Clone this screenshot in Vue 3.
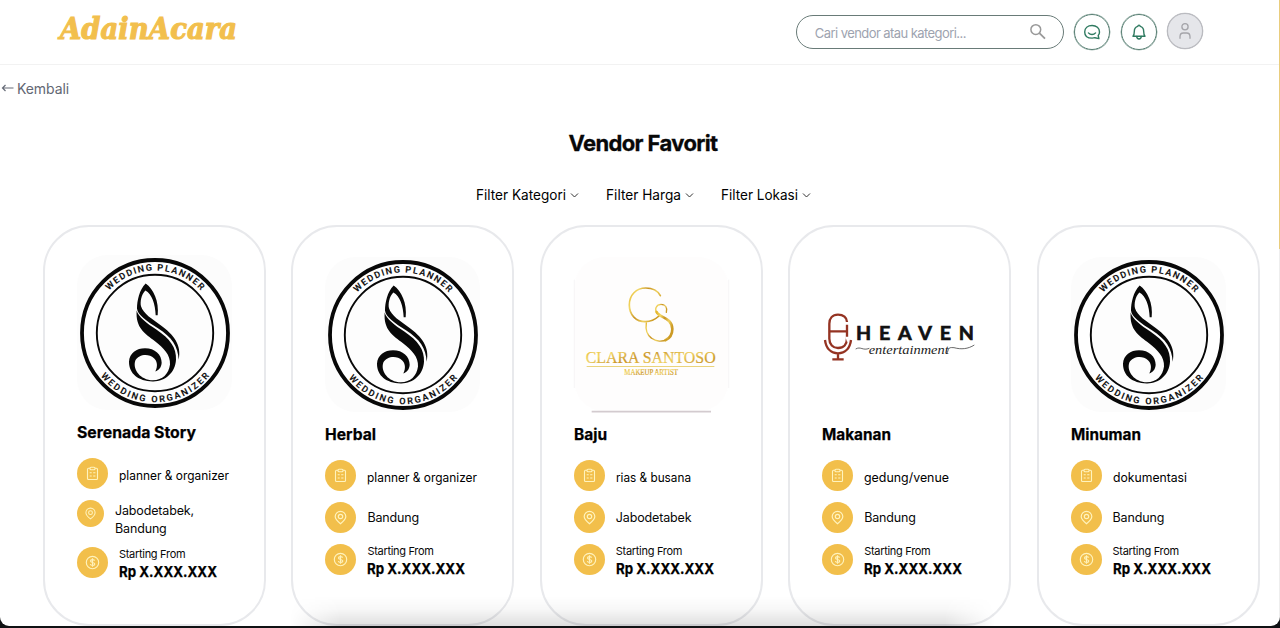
<script setup>
const filters = [
  { label: 'Filter Kategori', w: 90 },
  { label: 'Filter Harga', w: 75 },
  { label: 'Filter Lokasi', w: 77 }
]
const vendors = [
  { name: 'Serenada Story', w: 119, logo: 'wedding', category: 'planner & organizer', cw: 110, location: 'Jabodetabek, Bandung', wrap: true },
  { name: 'Herbal', w: 51, logo: 'wedding', category: 'planner & organizer', cw: 110, location: 'Bandung' },
  { name: 'Baju', w: 33, logo: 'clara', category: 'rias & busana', cw: 75, location: 'Jabodetabek' },
  { name: 'Makanan', w: 69, logo: 'heaven', category: 'gedung/venue', cw: 85, location: 'Bandung' },
  { name: 'Minuman', w: 70, logo: 'wedding', category: 'dokumentasi', cw: 74, location: 'Bandung' }
]
</script>

<template>
  <div class="page">
    <header class="header">
      <svg class="brand" width="182" height="34" viewBox="0 0 182 34" role="img">
        <text x="3" y="26" textLength="177" lengthAdjust="spacingAndGlyphs">AdainAcara</text>
      </svg>
      <div class="tools">
        <div class="search">
          <span>Cari vendor atau kategori...</span>
          <svg width="18" height="18" viewBox="0 0 18 18" fill="none" stroke="#999" stroke-width="1.5">
            <circle cx="6.8" cy="6.6" r="4.9" /><path d="M10.4 10.2 16 15.7" stroke-width="1.8" />
          </svg>
        </div>
        <div class="round chat">
          <svg width="18" height="18" viewBox="0 0 18 18" fill="none" stroke="#2f7a60" stroke-width="1.4" stroke-linecap="round" stroke-linejoin="round">
            <path d="M15.2 12.5c.9-1 1.300-2.200 1.300-3.600 0-3.900-3.100-6.400-7.400-6.400S1.700 5 1.700 8.900s3 6.200 7.400 6.200c1 0 2-.1 2.800-.4l4 .9z" />
            <path d="M5.400 9.900c2 2.200 5.200 2.200 7.200 0" />
          </svg>
        </div>
        <div class="round bell">
          <svg width="18" height="18" viewBox="0 0 18 18" fill="none" stroke="#2f7a60" stroke-width="1.4" stroke-linecap="round" stroke-linejoin="round">
            <path d="M3 13.300h12c-.8-.9-1.300-2-1.300-4.800 0-2.800-1.400-4.600-3.500-5.100C10 1.700 8 1.700 7.800 3.400 5.700 3.900 4.300 5.700 4.300 8.500c0 2.800-.5 3.900-1.300 4.800z" />
            <path d="M6.700 13.500c.2 3.300 4.400 3.300 4.600 0" />
          </svg>
        </div>
        <div class="round user">
          <svg width="18" height="18" viewBox="0 0 18 18" fill="none" stroke="#a4a4a9" stroke-width="1.3" stroke-linecap="round">
            <circle cx="9" cy="4.700" r="3.100" /><path d="M4 16.300v-1.500c0-2.300 1.200-3.800 3.300-3.800h3.400c2.100 0 3.300 1.500 3.300 3.800v1.500" />
          </svg>
        </div>
      </div>
    </header>

    <a class="back">
      <svg width="13" height="10" viewBox="0 0 13 10" fill="none" stroke="#666b77" stroke-width="1.2"><path d="M12.500 5H1.500M4.500 2 1.500 5l3 3" /></svg>
      <span>Kembali</span>
    </a>

    <h1>Vendor Favorit</h1>

    <nav class="filters">
      <button v-for="f in filters" :key="f.label">
        <svg :width="f.w" height="20"><text x="0" y="15" :textLength="f.w" lengthAdjust="spacingAndGlyphs">{{ f.label }}</text></svg>
        <svg width="9" height="7" viewBox="0 0 9 7" fill="none" stroke="#333" stroke-width="1"><path d="M1 1.500 4.500 5 8 1.500" /></svg>
      </button>
    </nav>

    <main class="cards">
      <article v-for="v in vendors" :key="v.name" class="card" :class="{ tall: v.wrap }">
        <svg v-if="v.logo === 'wedding'" class="logo" viewBox="0 0 155 155">
          <rect width="155" height="155" rx="31" fill="#fcfcfc" />
          <circle cx="78" cy="78" r="73" fill="#fff" stroke="#080808" stroke-width="3.800" />
          <circle cx="78" cy="78" r="58.200" fill="#fdfdfd" stroke="#080808" stroke-width="1.900" />
          <path id="arc-top" d="M15.500 78a62.500 62.500 0 0 1 125 0" fill="none" />
          <path id="arc-bottom" d="M8.700 78a69.300 69.300 0 0 0 138.600 0" fill="none" />
          <text class="ring"><textPath href="#arc-top" startOffset="50%" text-anchor="middle" textLength="103">WEDDING PLANNER</textPath></text>
          <text class="ring"><textPath href="#arc-bottom" startOffset="50%" text-anchor="middle" textLength="125">WEDDING ORGANIZER</textPath></text>
          <g transform="scale(.33333) translate(-141 -121.500)" fill="#080808">
            <path d="M347 207C370 222 388 262 383 302L377 302C376 270 366 238 346 228C334 240 330 262 333 275C340 298 368 314 392 332C430 360 456 390 446 436C444 395 425 368 385 342C350 320 322 300 321 282C321 260 328 225 347 207Z" />
            <path d="M320 288C325 307 350 326 380 346C420 373 440 400 438 436C436 475 405 502 368 501C325 500 297 478 297 442C298 415 320 401 345 401C375 401 395 420 395 445C394 460 386 468 376 471C384 455 382 440 372 431C355 415 325 420 316 438C308 460 325 492 362 497C395 500 416 480 420 450C422 420 400 400 375 380C345 358 316 340 320 288Z" />
          </g>
        </svg>

        <svg v-else-if="v.logo === 'clara'" class="logo" viewBox="117 112 465 465">
          <defs>
            <linearGradient id="gold" x1="0" x2="1" y1="0" y2=".5">
              <stop offset="0" stop-color="#e5b72e" /><stop offset=".25" stop-color="#f2d766" /><stop offset=".5" stop-color="#c99424" /><stop offset=".75" stop-color="#efd160" /><stop offset="1" stop-color="#cc9a25" />
            </linearGradient>
          </defs>
          <rect x="118" y="112" width="463" height="464" rx="93" fill="#fefdfd" />
          <path d="M118 180v325M581 180v325" stroke="#f1f0f2" stroke-width="2" />
          <path d="M170 576H528" stroke="#d3cbcf" stroke-width="5" />
          <g fill="none" stroke="url(#gold)" stroke-linecap="round">
            <path d="M376 228C367 211 350 205 332 205C304 205 283 226 283 256C283 286 303 306 331 306C348 306 360 300 372 289" stroke-width="5" />
            <path d="M394 278C398 263 390 254 378 254C364 254 357 270 366 280" stroke-width="4" />
            <path d="M365 277C371 294 411 292 412 328C412 344 404 356 391 362" stroke-width="8" />
            <path d="M396 359C382 367 363 366 350 356C336 346 331 330 334 310" stroke-width="4" />
          </g>
          <text x="152" y="431" class="clara" font-size="51" textLength="390" lengthAdjust="spacingAndGlyphs">CLARA SANTOSO</text>
          <path d="M155 440.500H538" stroke="#ead47c" stroke-width="3" />
          <text x="268" y="466" class="clara" font-size="23" textLength="161" lengthAdjust="spacingAndGlyphs">MAKEUP ARTIST</text>
        </svg>

        <svg v-else class="logo" viewBox="112 112 465 465">
          <g fill="none" stroke="#943322" stroke-width="7">
            <path d="M187 307C187 294 176 285 160 285C143 285 134 297 134 312V357C134 374 145 385 160 385C177 385 187 374 187 356V315M134 335H187" />
            <path d="M121 361C124 386 139 401 160 401C181 401 196 386 199 361M160 401V418M143 419H177" />
          </g>
          <path d="M182 351h12l-6 18z" fill="#fff" />
          <text x="214" y="360" class="heaven" textLength="354">HEAVEN</text>
          <text x="252" y="404" class="script" textLength="240" lengthAdjust="spacingAndGlyphs">entertainment</text>
          <path d="M213 388C228 379 234 394 254 386M486 402C494 390 486 382 508 384C530 390 550 388 569 376" fill="none" stroke="#333" stroke-width="2.200" />
        </svg>

        <h2><svg :width="v.w" height="24"><text x="0" y="17.500" :textLength="v.w" lengthAdjust="spacingAndGlyphs">{{ v.name }}</text></svg></h2>

        <div class="row">
          <span class="dot">
            <svg width="15" height="15" viewBox="0 0 15 15" fill="none" stroke="#fff3bd" stroke-width="1.100">
              <path d="M5 2.300H3.500q-1 0-1 1v9.200q0 1 1 1h8q1 0 1-1V3.300q0-1-1-1H10" /><rect x="5" y="1.200" width="5" height="2.500" rx="1" /><path d="M4.700 6.800h2M8.200 6.800h2.200M4.700 10h2M8.200 10h2.200" />
            </svg>
          </span>
          <svg class="label" :width="v.cw" height="18"><text x="0" y="14" :textLength="v.cw" lengthAdjust="spacingAndGlyphs">{{ v.category }}</text></svg>
        </div>
        <div class="row" :class="{ wrapped: v.wrap }">
          <span class="dot">
            <svg width="15" height="15" viewBox="0 0 15 15" fill="none" stroke="#fff3bd" stroke-width="1.200">
              <path d="M7.500 13.700C4.600 11.500 2.200 9.300 2.200 6.600a5.300 5.300 0 0 1 10.600 0c0 2.700-2.400 4.900-5.300 7.100z" /><circle cx="7.500" cy="6.500" r="2.200" />
            </svg>
          </span>
          <span class="place">{{ v.location }}</span>
        </div>
        <div class="row price">
          <span class="dot">
            <svg width="15" height="15" viewBox="0 0 15 15" fill="none" stroke="#fff3bd" stroke-width="1.150">
              <circle cx="7.500" cy="7.500" r="6.200" /><path d="M9.700 5.700C9.300 4.200 5.500 4.200 5.500 6s4.300 1.200 4.300 3.100c0 1.800-4 1.800-4.500.1M7.500 3.300v8.400" />
            </svg>
          </span>
          <div class="amount">
            <small>Starting From</small>
            <svg width="98" height="19"><text x="0" y="15" textLength="98" lengthAdjust="spacingAndGlyphs">Rp X.XXX.XXX</text></svg>
          </div>
        </div>
      </article>
    </main>
    <div class="shade"></div>
    <div class="edge"></div>
    <div class="frame"></div>
  </div>
</template>

<style>
html, body { margin: 0; overflow: hidden; background: #fff; }
</style>

<style scoped>
.page { position: relative; width: 1280px; height: 628px; overflow: hidden; box-sizing: border-box; background: #fff; color: #080808; font-family: Inter, "Open Sans", sans-serif; }
svg { display: block; flex: none; overflow: visible; }
.header { height: 65px; box-sizing: border-box; border-bottom: 1px solid #f2f2f2; display: flex; justify-content: space-between; align-items: flex-start; padding: 13px 77px 0 57px; }
.brand { font: italic 700 29px "DejaVu Serif", serif; fill: #f2bf4d; stroke: #f2bf4d; stroke-width: 1.1; }
.tools { display: flex; gap: 10.400px; }
.search { width: 268px; height: 34px; margin-top: 2px; box-sizing: border-box; border: 1px solid #697b78; border-radius: 17px; display: flex; align-items: center; justify-content: space-between; padding: 0 16px 0 18px; color: #9da3af; font-size: 13px; letter-spacing: -.57px; }
.search span { padding-top: 1px; white-space: nowrap; }
.search svg { margin-top: -1px; }
.round { width: 36px; height: 36px; box-sizing: border-box; border: 1.500px solid #587f73; border-radius: 50%; display: flex; align-items: center; justify-content: center; margin-top: 1px; box-shadow: 0 0 0 .3px #587f73; }
.round.user { margin-top: 0; background: #e5e6ea; border-color: #b9babf; box-shadow: 0 0 0 .3px #b9babf; }
.back { display: flex; align-items: center; gap: 3px; margin: 13px 0 0 1px; height: 20px; font-size: 14px; letter-spacing: -.08px; color: #626773; }
h1 { margin: 32px 0 0; padding-left: 6px; height: 26px; text-align: center; line-height: 26px; font-size: 22px; font-weight: 700; letter-spacing: -.620px; -webkit-text-stroke: .3px #080808; }
.filters { display: flex; justify-content: center; gap: 27px; margin-top: 29px; height: 20px; padding-left: 6px; font-size: 14px; }
.filters button { display: flex; align-items: center; gap: 4px; border: 0; padding: 0; background: none; color: inherit; font: inherit; }
.cards { display: flex; gap: 25.400px; margin: 20px 0 0 43px; }
.card { flex: none; width: 223px; height: 401px; box-sizing: border-box; border: 2px solid #e8e9ec; border-radius: 46px; padding: 0 32px 16px; display: flex; flex-direction: column; justify-content: center; }
.card.tall { padding-bottom: 14px; }
.logo { width: 155px; height: 155px; }
.ring { font: 700 9.200px Roboto, sans-serif; fill: #171717; }
.clara { font-family: "Liberation Serif", serif; fill: url(#gold); stroke: url(#gold); stroke-width: .7; }
.heaven { font: 700 59px Lato, sans-serif; fill: #111; stroke: #111; stroke-width: 2; }
.script { font: italic 35px "Liberation Serif", serif; fill: #222; }
h2 { height: 24px; margin: 10px 0 14px; font-size: 15.500px; font-weight: 700; }
h2 text, .amount text { stroke: #080808; stroke-width: .25; }
.row { display: flex; align-items: center; gap: 11px; margin-bottom: 11px; font-size: 12.500px; }
.dot { flex: none; width: 31px; height: 31px; border-radius: 50%; background: #f2bf4b; display: flex; align-items: center; justify-content: center; }
.label { margin-top: 3px; }
.place { line-height: 18px; letter-spacing: -.15px; padding-top: 2px; }
.wrapped { align-items: flex-start; }
.wrapped .dot { width: 27px; height: 27px; }
.wrapped .dot svg { width: 13px; height: 13px; }
.wrapped .place { width: 90px; line-height: 17.700px; padding-top: 1.500px; margin-bottom: -1.500px; }
.price { height: 31px; margin-bottom: 4px; }
.amount { padding-top: 3px; }
.amount small { display: block; font-size: 11px; line-height: 16px; letter-spacing: -.3px; }
.amount svg { font-size: 15px; font-weight: 700; }
.shade { position: absolute; left: 290px; top: 596px; width: 705px; height: 30px; background: linear-gradient(transparent, rgba(0, 0, 0, .03) 45%, rgba(0, 0, 0, .13)); -webkit-mask-image: linear-gradient(90deg, transparent, #000 50px, #000 655px, transparent); mask-image: linear-gradient(90deg, transparent, #000 50px, #000 655px, transparent); }
.edge { position: absolute; right: 0; top: 0; width: 1px; height: 628px; background: linear-gradient(#e9cd7d 249px, #eee 249px); }
.frame { position: absolute; left: 0; top: 0; width: 1280px; height: 626px; border-radius: 0 0 9px 9px; box-shadow: 0 0 0 10px #101214; pointer-events: none; }
</style>
